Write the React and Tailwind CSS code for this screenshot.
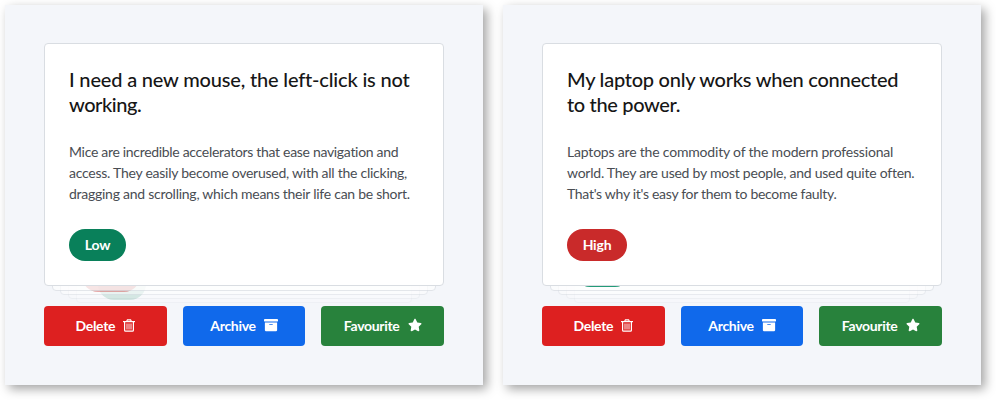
import { FaArchive, FaStar } from "react-icons/fa";

const tickets = [
  {
    title: [
      ["I need a new mouse, the left-click is not", "tracking-[-0.18px]"],
      ["working.", "tracking-[-0.45px]"],
    ],
    body: [
      ["Mice are incredible accelerators that ease navigation and", "tracking-[-0.31px]"],
      ["access. They easily become overused, with all the clicking,", "tracking-[-0.25px]"],
      ["dragging and scrolling, which means their life can be short.", "tracking-[-0.26px]"],
    ],
    level: "Low",
    pill: "bg-[#09805a] w-[57px]",
  },
  {
    title: [
      ["My laptop only works when connected", "tracking-[-0.25px]"],
      ["to the power.", "tracking-[-0.35px]"],
    ],
    body: [
      ["Laptops are the commodity of the modern professional", "tracking-[-0.19px]"],
      ["world. They are used by most people, and used quite often.", "tracking-[-0.24px]"],
      ["That's why it's easy for them to become faulty.", "tracking-[-0.3px]"],
    ],
    level: "High",
    pill: "bg-[#c92a2a] w-[60px]",
  },
];

function TrashIcon({ className }) {
  return (
    <svg viewBox="0 0 12 13" className={className} fill="none" stroke="currentColor">
      <path d="M0 2.6h12" strokeWidth="1.2" />
      <path d="M3.6 2.4L4.4 0.8h3.2L8.4 2.4M1.6 2.6v8.6c0 .6.4 1 1 1h6.8c.6 0 1-.4 1-1V2.6" strokeWidth="1.2" />
      <path d="M4 4.5v6M6 4.5v6M8 4.5v6" strokeWidth="0.9" />
    </svg>
  );
}

function Lines({ items }) {
  return items.map(([text, spacing]) => (
    <span key={text} className={`block whitespace-nowrap ${spacing}`}>{text}</span>
  ));
}

// Faded tickets waiting beneath the top one, deepest first.
function Stack({ level }) {
  const edge = "absolute h-[40px] rounded-[4px] border border-[#d9dde3] bg-white";
  return (
    <>
      <div className={`${edge} inset-x-[32px] bottom-[-17px] opacity-20`} />
      <div className={`${edge} inset-x-[24px] bottom-[-13px] opacity-30`} />
      {level === "Low" && (
        <div className="absolute bottom-[-14px] left-[54px] h-[32px] w-[48px] rounded-full bg-[#09805a] opacity-15" />
      )}
      <div className={`${edge} inset-x-[16px] bottom-[-9px] opacity-50`} />
      {level === "Low" && (
        <div className="absolute bottom-[-6px] left-[38px] h-[32px] w-[58px] rounded-full bg-[#c92a2a] opacity-40" />
      )}
      <div className={`${edge} inset-x-[8px] bottom-[-5px] opacity-70`} />
      {level === "High" && (
        <div className="absolute bottom-[-1px] left-[32px] h-[32px] w-[57px] rounded-full bg-[#239b78]" />
      )}
    </>
  );
}

function Action({ label, icon: Icon, color, size }) {
  return (
    <button className={`flex h-10 flex-1 items-center justify-center gap-2 rounded-[4px] pb-0.5 text-[14px] font-bold tracking-[-0.3px] text-white ${color}`}>
      <span>{label}</span>
      <Icon className={size} />
    </button>
  );
}

function Ticket({ title, body, level, pill }) {
  return (
    <section className="h-[380px] w-[478px] bg-[#f4f6fa] px-[39px] pt-[38px] shadow-[4px_4px_10px_rgba(0,0,0,0.36)]">
      <div className="relative h-[243px]">
        <Stack level={level} />
        <article className="relative flex h-full flex-col items-start rounded-[4px] border border-[#d9dde2] bg-white px-6 pt-[23px]">
          <h2 className="text-[20px] leading-[25px] font-medium text-[#161616]"><Lines items={title} /></h2>
          <p className="mt-6 text-[14px] leading-[21px] text-[#494d53]"><Lines items={body} /></p>
          <span className={`mt-[25px] flex h-8 items-center justify-center rounded-full pb-0.5 text-[14px] font-bold tracking-[-0.2px] text-white ${pill}`}>{level}</span>
        </article>
      </div>
      <div className="mt-5 flex gap-4">
        <Action label="Delete" icon={TrashIcon} color="bg-[#dd2020]" size="h-[13px] w-[12px]" />
        <Action label="Archive" icon={FaArchive} color="bg-[#1069eb]" size="size-[14px]" />
        <Action label="Favourite" icon={FaStar} color="bg-[#28823c]" size="size-[14px]" />
      </div>
    </section>
  );
}

export default function App() {
  return (
    <main className="flex h-[400px] gap-5 overflow-hidden bg-white p-[5px] font-['Lato',sans-serif]">
      {tickets.map((t) => <Ticket key={t.level} {...t} />)}
    </main>
  );
}
